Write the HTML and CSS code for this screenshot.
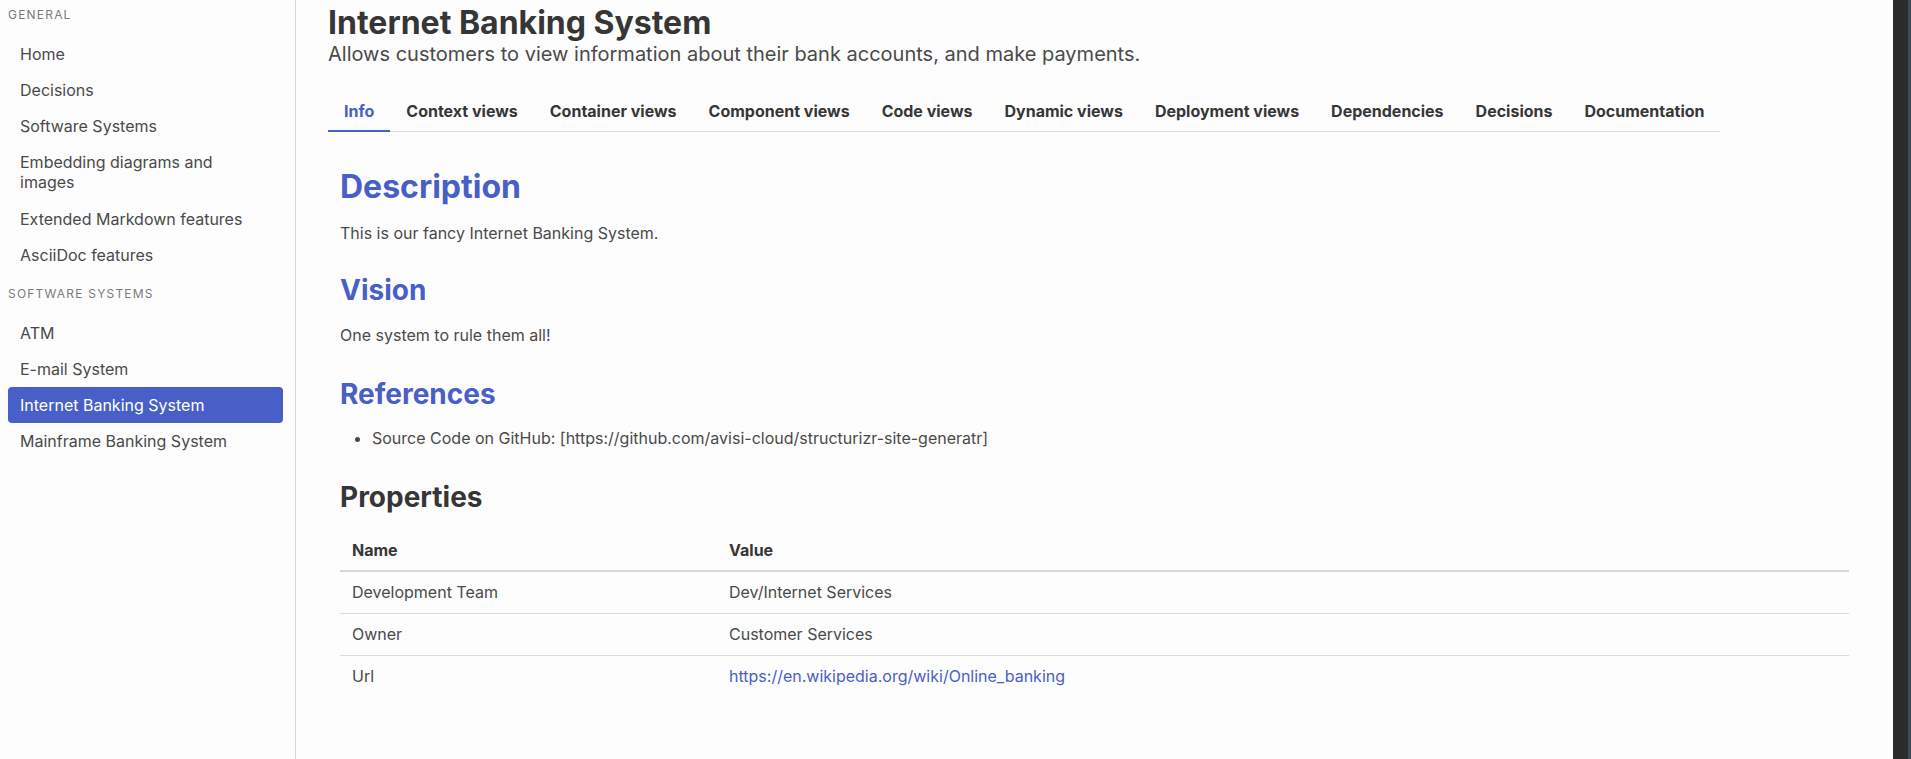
FILE: index.html
```html
<!DOCTYPE html>
<html lang="en">
<head>
<meta charset="utf-8">
<title>Internet Banking System</title>
<link rel="stylesheet" href="styles.css">
</head>
<body>
<div class="layout">
  <aside class="sidebar">
    <p class="menu-label">General</p>
    <ul class="menu-list">
      <li><a href="#">Home</a></li>
      <li><a href="#">Decisions</a></li>
      <li><a href="#">Software Systems</a></li>
      <li><a href="#" class="multi">Embedding diagrams and images</a></li>
      <li><a href="#">Extended Markdown features</a></li>
      <li><a href="#">AsciiDoc features</a></li>
    </ul>
    <p class="menu-label">Software Systems</p>
    <ul class="menu-list">
      <li><a href="#">ATM</a></li>
      <li><a href="#">E-mail System</a></li>
      <li><a href="#" class="is-active">Internet Banking System</a></li>
      <li><a href="#">Mainframe Banking System</a></li>
    </ul>
  </aside>
  <main class="main">
    <h1 class="title">Internet Banking System</h1>
    <p class="subtitle">Allows customers to view information about their bank accounts, and make payments.</p>
    <nav class="tabs">
      <ul>
        <li><a href="#" class="is-active">Info</a></li>
        <li><a href="#">Context views</a></li>
        <li><a href="#">Container views</a></li>
        <li><a href="#">Component views</a></li>
        <li><a href="#">Code views</a></li>
        <li><a href="#">Dynamic views</a></li>
        <li><a href="#">Deployment views</a></li>
        <li><a href="#">Dependencies</a></li>
        <li><a href="#">Decisions</a></li>
        <li><a href="#">Documentation</a></li>
      </ul>
    </nav>
    <section class="content">
      <h1 class="doc-title">Description</h1>
      <p class="lead">This is our fancy Internet Banking System.</p>
      <h2 class="accent">Vision</h2>
      <p>One system to rule them all!</p>
      <h2 class="accent">References</h2>
      <ul class="refs">
        <li>Source Code on GitHub: [https://github.com/avisi-cloud/structurizr-site-generatr]</li>
      </ul>
      <h2 class="plain">Properties</h2>
      <table class="props">
        <thead>
          <tr><th class="col-name">Name</th><th>Value</th></tr>
        </thead>
        <tbody>
          <tr><td>Development Team</td><td>Dev/Internet Services</td></tr>
          <tr><td>Owner</td><td>Customer Services</td></tr>
          <tr><td>Url</td><td><a href="#">https://en.wikipedia.org/wiki/Online_banking</a></td></tr>
        </tbody>
      </table>
    </section>
  </main>
  <div class="edge"></div>
</div>
</body>
</html>
```

FILE: styles.css
```css
* { box-sizing: border-box; }

html, body {
  margin: 0;
  padding: 0;
  height: 100%;
}

body {
  font-family: Inter, "Noto Sans", "Liberation Sans", sans-serif;
  font-size: 16px;
  line-height: 1.5;
  color: #4a4a4a;
  background: #fdfdfd;
  overflow: hidden;
}

a { text-decoration: none; }

.layout {
  display: flex;
  height: 759px;
}

/* Sidebar */
.sidebar {
  width: 296px;
  flex: 0 0 296px;
  border-right: 1px solid #d6d6d6;
  padding: 6px 12px 0 8px;
  background: #fdfdfd;
}

.menu-label {
  margin: 0 0 12px 0;
  font-size: 12px;
  line-height: 18px;
  letter-spacing: 0.1em;
  text-transform: uppercase;
  color: #7a7a7a;
}

.menu-list {
  list-style: none;
  margin: 0;
  padding: 0;
}

.menu-list + .menu-label {
  margin-top: 12px;
}

.menu-list a {
  display: block;
  padding: 8px 24px 8px 12px;
  line-height: 20px;
  border-radius: 4px;
  color: #4a4a4a;
}

.menu-list a.multi {
  line-height: 20.25px;
}

.menu-list a.is-active {
  background: #485fc7;
  color: #fff;
}

/* Main */
.main {
  flex: 1 1 auto;
  min-width: 0;
  padding: 5px 32px 0 32px;
}

.title {
  margin: 0;
  font-size: 32px;
  font-weight: 700;
  line-height: 1.125;
  color: #363636;
}

.subtitle {
  margin: 1px 0 0 0;
  font-size: 20px;
  line-height: 1.25;
  color: #4a4a4a;
}

.tabs {
  margin-top: 24px;
}

.tabs ul {
  display: flex;
  width: fit-content;
  list-style: none;
  margin: 0;
  padding: 0;
  border-bottom: 1px solid #dbdbdb;
}

.tabs a {
  display: block;
  padding: 8px 16px;
  line-height: 24px;
  margin-bottom: -1px;
  border-bottom: 1px solid #dbdbdb;
  font-weight: 700;
  color: #363636;
}

.tabs a.is-active {
  color: #485fc7;
  border-bottom: 2px solid #485fc7;
  margin-bottom: -1px;
  padding-bottom: 7px;
}

/* Content */
.content {
  margin-top: 37px;
  padding: 0 12px;
}

.content .doc-title {
  margin: 0 0 16px 0;
  font-size: 32px;
  font-weight: 700;
  line-height: 1.125;
  color: #485fc7;
}

.content h2 {
  margin: 32px 0 16px 0;
  font-size: 28px;
  font-weight: 700;
  line-height: 1.125;
}

.content h2.accent { color: #485fc7; }
.content h2.plain { color: #363636; }

.content p {
  margin: 0 0 16px 0;
}

.content p.lead {
  margin-bottom: 0;
}

.content p.lead + h2 {
  margin-top: 30px;
}

.refs {
  list-style: disc outside;
  margin: 16px 0 16px 32px;
  padding: 0;
}

.props {
  width: 100%;
  border-collapse: collapse;
  border-spacing: 0;
}

.props th,
.props td {
  padding: 8px 12px;
  text-align: left;
  vertical-align: top;
  border-bottom: 1px solid #dbdbdb;
}

.props td {
  padding-top: 8.5px;
  padding-bottom: 8.5px;
}

.props th {
  font-weight: 700;
  color: #363636;
  border-bottom: 2px solid #d3d7dc;
}

.props .col-name {
  width: 377px;
}

.props tbody tr:last-child td {
  border-bottom: 0;
}

.props a { color: #485fc7; }

/* Right window edge */
.edge {
  flex: 0 0 18px;
  background: #2b2b2b;
  border-right: 3px solid #3e4a5c;
}
```
